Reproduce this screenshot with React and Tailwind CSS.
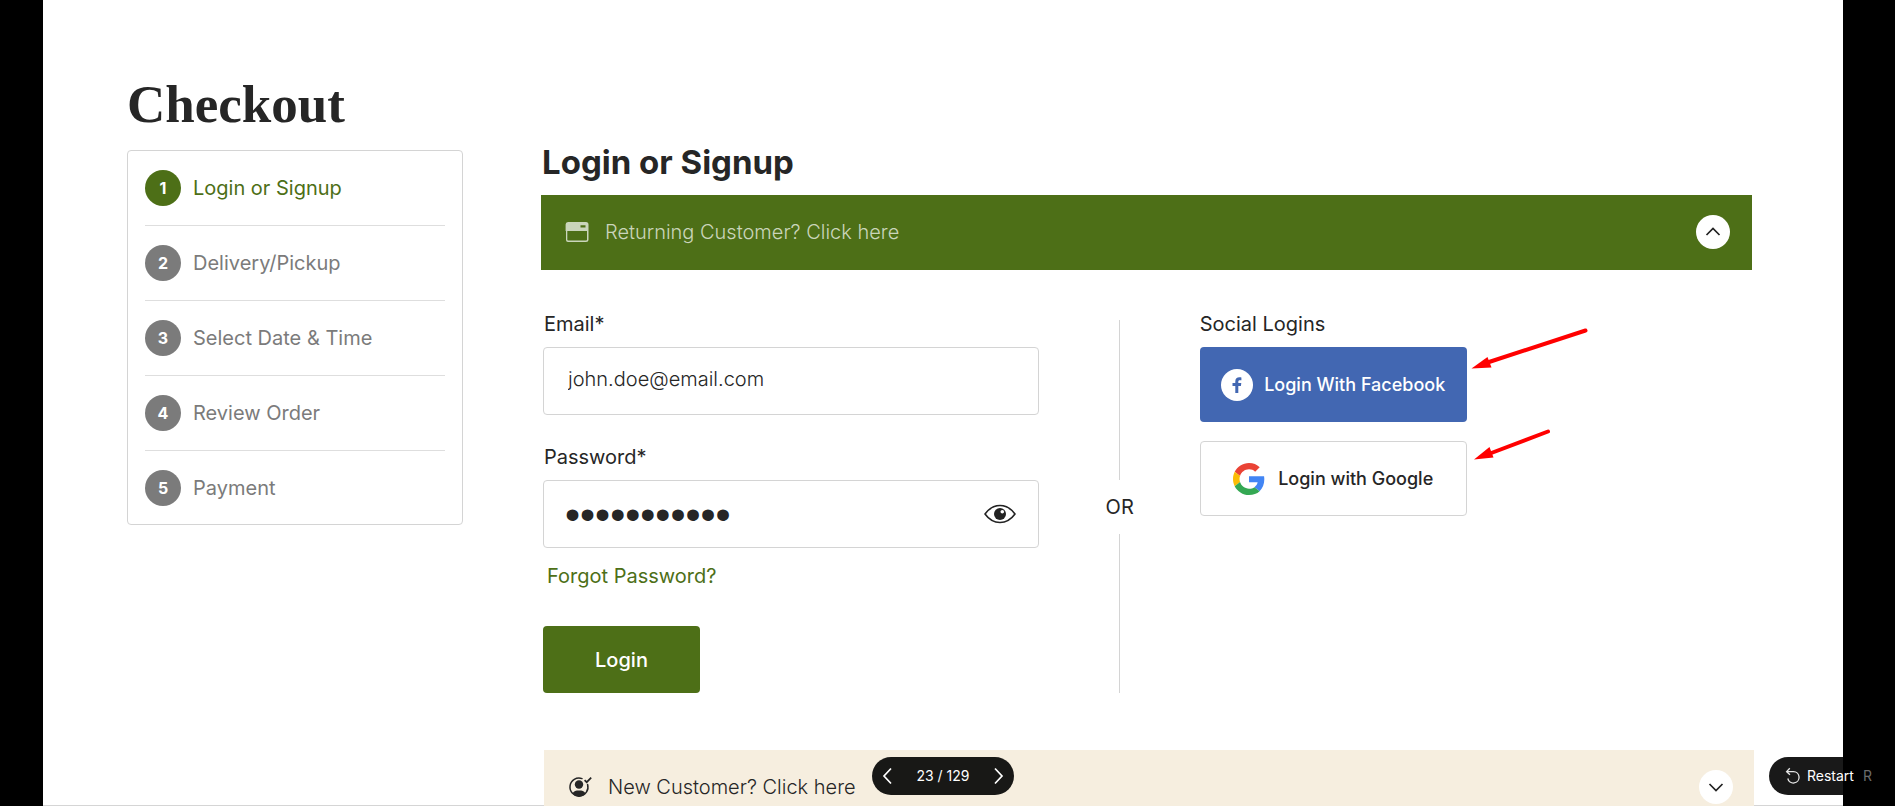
import React from "react";

const steps = ["Login or Signup", "Delivery/Pickup", "Select Date & Time", "Review Order", "Payment"];

function WindowIcon() {
  return (
    <svg viewBox="0 0 24 22" className="h-[22px] w-6 shrink-0" aria-hidden="true">
      <path
        fillRule="evenodd"
        fill="#cad5bb"
        d="M3 1H21Q23.500 1 23.500 3.500V19Q23.500 21 21 21H3Q1 21 1 19V10H.6V3.500Q.6 1 3 1ZM15.500 4.200V6.600H20.500V4.200ZM2.300 10V18.700Q2.300 19.500 3.200 19.500H21Q22 19.500 22 18.700V10Z"
      />
    </svg>
  );
}

function CustomerIcon() {
  return (
    <svg viewBox="0 0 24 22" className="h-[22px] w-6 shrink-0" fill="none" aria-hidden="true">
      <path d="M14 2.600A9 9 0 1 0 19.600 8.500" stroke="#262626" strokeWidth="1.500" strokeLinecap="round" />
      <circle cx="11" cy="8.500" r="4.200" fill="#262626" />
      <path d="M4.500 17.600C5.600 14.800 8 14.400 11 14.400S16.400 14.800 17.500 17.600C15.800 19.800 13.500 20.900 11 20.900S6.200 19.800 4.500 17.600Z" fill="#262626" />
      <path d="M16.600 4.100L18.700 6.200L23.200 1.600" stroke="#262626" strokeWidth="1.700" />
    </svg>
  );
}

function EyeIcon() {
  return (
    <svg viewBox="0 0 32 20" className="h-5 w-8" fill="none" aria-hidden="true">
      <path d="M1 10C5 4.500 10 1.500 16 1.500S27 4.500 31 10C27 15.500 22 18.500 16 18.500S5 15.500 1 10Z" stroke="#222" strokeWidth="1.600" strokeLinejoin="round" />
      <circle cx="16" cy="10" r="6" fill="#222" />
      <circle cx="18.300" cy="7.800" r="1.800" fill="#fff" />
    </svg>
  );
}

function FacebookIcon() {
  return (
    <svg viewBox="0 0 32 32" className="h-8 w-8 shrink-0" aria-hidden="true">
      <circle cx="16" cy="16" r="16" fill="#fff" />
      <path fill="#4267b2" d="M14.300 24V17H11.500V13.900H14.300V12.400C14.300 9.500 15.900 8.200 18.400 8.200C19.300 8.200 20.100 8.300 20.400 8.400V11.200H18.900C17.600 11.200 17.300 11.800 17.300 12.800V13.900H20.300L19.900 17H17.300V24Z" />
    </svg>
  );
}

function GoogleIcon() {
  return (
    <svg viewBox="0 0 48 48" className="h-8 w-8 shrink-0" aria-hidden="true">
      <path fill="#EA4335" d="M24 9.500c3.540 0 6.710 1.220 9.210 3.600l6.850-6.850C35.900 2.380 30.470 0 24 0 14.620 0 6.510 5.380 2.560 13.220l7.980 6.190C12.430 13.720 17.740 9.500 24 9.500z" />
      <path fill="#4285F4" d="M46.980 24.550c0-1.570-.15-3.090-.38-4.550H24v9.020h12.940c-.58 2.960-2.260 5.480-4.780 7.180l7.730 6c4.510-4.180 7.090-10.360 7.090-17.650z" />
      <path fill="#FBBC05" d="M10.530 28.590c-.48-1.450-.76-2.990-.76-4.590s.27-3.140.76-4.590l-7.980-6.190C.92 16.460 0 20.120 0 24c0 3.880.92 7.540 2.560 10.780l7.970-6.190z" />
      <path fill="#34A853" d="M24 48c6.480 0 11.930-2.130 15.890-5.810l-7.730-6c-2.150 1.450-4.920 2.300-8.160 2.300-6.260 0-11.570-4.220-13.470-9.910l-7.980 6.190C6.510 42.620 14.620 48 24 48z" />
    </svg>
  );
}

function RestartIcon() {
  return (
    <svg viewBox="0 0 16 18" className="h-[18px] w-4" fill="none" stroke="#e5e5e5" strokeWidth="1.300" aria-hidden="true">
      <path d="M4.800 1.200L1.600 4.600L5 7.800M1.800 4.600H8.500A5.700 5.700 0 1 1 2.800 11.500" />
    </svg>
  );
}

function Chevron({ d, className }) {
  return (
    <svg viewBox="0 0 16 16" className={className} fill="none" stroke="currentColor" strokeWidth="1.700" aria-hidden="true">
      <path d={d} />
    </svg>
  );
}

function RoundToggle({ label, d }) {
  return (
    <button aria-label={label} className="ml-auto flex h-[34px] w-[34px] items-center justify-center rounded-full bg-white text-[#222]">
      <Chevron d={d} className="h-4 w-4" />
    </button>
  );
}

export default function App() {
  return (
    <div className="relative flex h-screen overflow-hidden bg-black pl-[43px] pr-[52px] font-['Inter',sans-serif] text-[#262626]">
      <main className="flex min-w-0 flex-1 overflow-hidden bg-white pl-[84px] pr-[91px] shadow-[inset_0_-1px_0_#d5d5d5]">
        <aside className="w-[336px] shrink-0 pt-[74px]">
          <h1 className="h-[76px] font-['Liberation_Serif',serif] text-[53px] leading-[60px] font-bold">Checkout</h1>
          <ol className="rounded border border-[#d4d4d4] px-[17px]">
            {steps.map((step, i) => (
              <li
                key={step}
                className={
                  "flex h-[75px] items-center gap-3 border-b border-[#dedede] text-xl last:h-[73px] last:border-b-0 " +
                  (i === 0 ? "text-[#4d6f17]" : "text-[#7b7b7b]")
                }
              >
                <span
                  className={
                    "flex h-9 w-9 items-center justify-center rounded-full text-base font-bold text-white " +
                    (i === 0 ? "bg-[#4d6f17]" : "bg-[#7b7b7b]")
                  }
                >
                  {i + 1}
                </span>
                {step}
              </li>
            ))}
          </ol>
        </aside>

        <div className="ml-[78px] min-w-0 flex-1 pt-[140px]">
          <h2 className="pl-px text-[33px] leading-[44px] font-bold">Login or Signup</h2>
          <div className="mt-[11px] flex h-[75px] items-center bg-[#4d6f17] pr-[22px] pb-0.5 pl-6 text-xl font-light text-[#cad5bb]">
            <WindowIcon />
            <span className="ml-4">Returning Customer? Click here</span>
            <RoundToggle label="Collapse" d="M1.500 11L8 4.500L14.500 11" />
          </div>

          <div className="ml-[2px] flex pt-10 text-xl">
            <form className="w-[41%]" onSubmit={(e) => e.preventDefault()}>
              <label htmlFor="email" className="block pl-px leading-7">Email*</label>
              <input
                id="email"
                type="email"
                defaultValue="john.doe@email.com"
                className="mt-[9px] block h-[68px] w-full rounded border border-[#d4d4d4] px-6 pb-1 font-light outline-none"
              />
              <label htmlFor="password" className="mt-7 block pl-px leading-7">Password*</label>
              <div className="mt-[9px] flex h-[68px] items-center rounded border border-[#d4d4d4] pr-[22px] pl-[21px]">
                <input
                  id="password"
                  type="password"
                  defaultValue="password123"
                  className="min-w-0 flex-1 font-['Liberation_Sans',sans-serif] text-[43px] leading-[50px] outline-none"
                />
                <button type="button" aria-label="Show password"><EyeIcon /></button>
              </div>
              <a href="#forgot" className="mt-[14px] block pl-1 leading-7 text-[#4d6f17]">Forgot Password?</a>
              <button className="mt-9 block h-[67px] w-[157px] rounded bg-[#4d6f17] font-medium text-white">Login</button>
            </form>

            <div className="mt-[10px] ml-[65px] flex w-8 flex-col items-center">
              <div className="w-px flex-[160] bg-[#d4d4d4]" />
              <span className="flex h-[54px] items-center leading-7">OR</span>
              <div className="w-px flex-[160] bg-[#d4d4d4]" />
            </div>

            <section className="ml-[64px] w-[267px]">
              <h3 className="leading-7">Social Logins</h3>
              <button className="mt-[9px] flex h-[75px] w-full items-center justify-center gap-[11px] rounded bg-[#4267b2] text-lg font-medium text-white">
                <FacebookIcon />
                Login With Facebook
              </button>
              <button className="mt-[19px] flex h-[75px] w-full items-center justify-center gap-[13px] rounded border border-[#d4d4d4] text-lg font-medium">
                <GoogleIcon />
                Login with Google
              </button>
            </section>
          </div>

          <div className="mt-[57px] -mr-[2px] ml-[3px] flex h-[75px] items-center bg-[#f6eedf] pr-[21px] pb-0.5 pl-6 text-xl font-light">
            <CustomerIcon />
            <span className="ml-4">New Customer? Click here</span>
            <RoundToggle label="Expand" d="M1.500 5L8 11.500L14.500 5" />
          </div>
        </div>
      </main>

      <svg viewBox="0 0 120 132" className="absolute top-[328px] left-[1470px] h-[132px] w-[120px]" fill="#f00" stroke="#f00" aria-hidden="true">
        <path d="M115.500 2.500L16 35" strokeWidth="4" strokeLinecap="round" />
        <path d="M1.500 40.500L17.500 29L21.500 39.500Z" stroke="none" />
        <path d="M78 103.500L20 125.500" strokeWidth="4" strokeLinecap="round" />
        <path d="M4 131.500L19.500 119L23.500 129.500Z" stroke="none" />
      </svg>

      <nav className="absolute bottom-[11px] left-[872px] flex h-[38px] w-[142px] items-center justify-between rounded-full bg-black/90 px-2 text-sm text-white">
        <button aria-label="Previous"><Chevron d="M11 0.500L4 8L11 15.500" className="h-5 w-4" /></button>
        <span>23 / 129</span>
        <button aria-label="Next"><Chevron d="M5 0.500L12 8L5 15.500" className="h-5 w-4" /></button>
      </nav>

      <button className="absolute right-0 bottom-[11px] flex h-[38px] w-[126px] items-center rounded-l-full bg-black/90 pl-4 text-sm text-white">
        <RestartIcon />
        <span className="ml-[6px]">Restart</span>
        <span className="ml-[9px] text-[#6c6c6c]">R</span>
      </button>
    </div>
  );
}
